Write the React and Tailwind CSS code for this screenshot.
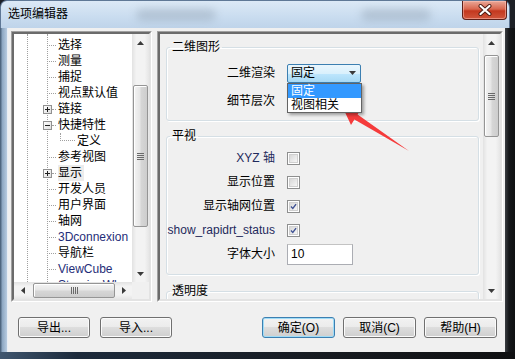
import React from "react";

function Tri({ dir }) {
  if (dir === "up")
    return (
      <svg width="7" height="4" viewBox="0 0 7 4"><path d="M0 4 L3.5 0 L7 4 Z" fill="#3a3a3a" /></svg>
    );
  if (dir === "down")
    return (
      <svg width="7" height="4" viewBox="0 0 7 4"><path d="M0 0 L7 0 L3.5 4 Z" fill="#3a3a3a" /></svg>
    );
  if (dir === "left")
    return (
      <svg width="4" height="7" viewBox="0 0 4 7"><path d="M4 0 L4 7 L0 3.5 Z" fill="#3a3a3a" /></svg>
    );
  return (
    <svg width="4" height="7" viewBox="0 0 4 7"><path d="M0 0 L4 3.5 L0 7 Z" fill="#3a3a3a" /></svg>
  );
}

function VGrip() {
  return (
    <div className="flex flex-col gap-[1px]">
      <div className="w-[7px] h-px bg-[#6a6a6a]" />
      <div className="w-[7px] h-px bg-[#6a6a6a]" />
      <div className="w-[7px] h-px bg-[#6a6a6a]" />
      <div className="w-[7px] h-px bg-[#6a6a6a]" />
    </div>
  );
}

function HGrip() {
  return (
    <div className="flex flex-row gap-[1px]">
      <div className="h-[7px] w-px bg-[#6a6a6a]" />
      <div className="h-[7px] w-px bg-[#6a6a6a]" />
      <div className="h-[7px] w-px bg-[#6a6a6a]" />
      <div className="h-[7px] w-px bg-[#6a6a6a]" />
    </div>
  );
}

function VScroll({ beforeCls, thumbCls }) {
  return (
    <div className="w-[17px] h-full flex flex-col bg-[linear-gradient(to_right,#e2e2e2,#f3f3f3_25%,#f3f3f3_75%,#e6e6e6)]">
      <div className="h-[17px] shrink-0 flex items-center justify-center">
        <Tri dir="up" />
      </div>
      <div className={"shrink-0 " + beforeCls} />
      <div
        className={
          "shrink-0 mx-[1px] rounded-[2px] border border-[#959595] bg-[linear-gradient(to_right,#f4f4f4,#e6e6e6_45%,#d6d6d6_55%,#cdcdcd)] shadow-[inset_1px_1px_0_#ffffff] flex items-center justify-center " +
          thumbCls
        }
      >
        <VGrip />
      </div>
      <div className="flex-1" />
      <div className="h-[17px] shrink-0 flex items-center justify-center">
        <Tri dir="down" />
      </div>
    </div>
  );
}

function HScroll() {
  return (
    <div className="h-[17px] w-full flex flex-row bg-[linear-gradient(to_bottom,#e2e2e2,#f3f3f3_25%,#f3f3f3_75%,#e6e6e6)]">
      <div className="w-[17px] shrink-0 flex items-center justify-center">
        <Tri dir="left" />
      </div>
      <div className="w-[2px] shrink-0" />
      <div className="w-[82px] shrink-0 my-[1px] rounded-[2px] border border-[#959595] bg-[linear-gradient(to_bottom,#f4f4f4,#e6e6e6_45%,#d6d6d6_55%,#cdcdcd)] shadow-[inset_1px_1px_0_#ffffff] flex items-center justify-center">
        <HGrip />
      </div>
      <div className="flex-1" />
      <div className="w-[17px] shrink-0 flex items-center justify-center">
        <Tri dir="right" />
      </div>
    </div>
  );
}

function Box({ plus }) {
  return (
    <svg width="9" height="9" viewBox="0 0 9 9" className="-ml-[4px] shrink-0 relative z-10">
      <defs>
        <linearGradient id={plus ? "gp" : "gm"} x1="0" y1="0" x2="1" y2="1">
          <stop offset="0" stopColor="#ffffff" />
          <stop offset="1" stopColor="#dcdcdc" />
        </linearGradient>
      </defs>
      <rect x="0.5" y="0.5" width="8" height="8" fill={plus ? "url(#gp)" : "url(#gm)"} stroke="#919191" />
      <line x1="2" y1="4.5" x2="7" y2="4.5" stroke="#1f1f1f" />
      {plus && <line x1="4.5" y1="2" x2="4.5" y2="7" stroke="#1f1f1f" />}
    </svg>
  );
}

const treeItems = [
  { t: "选择" },
  { t: "测量" },
  { t: "捕捉" },
  { t: "视点默认值" },
  { t: "链接", box: "plus" },
  { t: "快捷特性", box: "minus" },
  { t: "定义", child: true },
  { t: "参考视图" },
  { t: "显示", box: "plus", sel: true },
  { t: "开发人员" },
  { t: "用户界面" },
  { t: "轴网" },
  { t: "3Dconnexion", en: true },
  { t: "导航栏" },
  { t: "ViewCube", en: true },
  { t: "SteeringWheels", en: true },
];

function Tree() {
  return (
    <div className="relative bg-white overflow-hidden pt-[3px] h-full">
      <div className="absolute left-[13px] top-0 bottom-0 border-l border-dotted border-[#a0a0a0]" />
      <div className="absolute left-[33px] top-0 bottom-0 border-l border-dotted border-[#a0a0a0]" />
      {treeItems.map((it) =>
        it.child ? (
          <div key={it.t} className="h-[16px] flex items-start pl-[46px] whitespace-nowrap">
            <span className="w-[15px] h-[8px] shrink-0 border-l border-b border-dotted border-[#a0a0a0]" />
            <span className="ml-[2px] leading-[16px]">{it.t}</span>
          </div>
        ) : (
          <div key={it.t} className="h-[16px] flex items-center pl-[33px] whitespace-nowrap">
            {it.box ? (
              <>
                <Box plus={it.box === "plus"} />
                <span className="w-[4px] shrink-0 border-t border-dotted border-[#a0a0a0]" />
              </>
            ) : (
              <span className="w-[9px] shrink-0 border-t border-dotted border-[#a0a0a0]" />
            )}
            <span
              className={
                "ml-[2px] leading-[16px] " +
                (it.en ? "text-[#1f2d78] " : "") +
                (it.sel ? "bg-[#ececec] pr-[2px] -ml-[0px]" : "")
              }
            >
              {it.t}
            </span>
          </div>
        )
      )}
    </div>
  );
}

function Check({ checked }) {
  return (
    <div className="w-[13px] h-[13px] border border-[#8e8f8f] bg-white p-[1px]">
      <div className="w-full h-full border border-[#d0d0d0] bg-[linear-gradient(135deg,#d8d8d8,#f6f6f6)] flex items-center justify-center">
        {checked && (
          <svg width="9" height="9" viewBox="0 0 9 9">
            <path d="M1.2 4.6 L3.6 7 L7.8 1.4" stroke="#3e5193" strokeWidth="1.7" fill="none" />
          </svg>
        )}
      </div>
    </div>
  );
}

function Row({ label, children, h = "h-[24px]", labelCls = "" }) {
  return (
    <div className={"flex items-center " + h}>
      <div className={"w-[108px] shrink-0 text-right leading-[16px] whitespace-nowrap " + labelCls}>{label}</div>
      <div className="ml-[12px]">{children}</div>
    </div>
  );
}

function Group({ title, className, children }) {
  return (
    <fieldset
      className={
        "border border-[#d5dfe5] rounded-[3px] shadow-[inset_1px_1px_0_#ffffff,1px_1px_0_#ffffff] " + className
      }
    >
      <legend className="ml-[3px] px-[2px] leading-[14px] text-[12px]">{title}</legend>
      {children}
    </fieldset>
  );
}

function Btn({ children, def, w = "w-[72px]" }) {
  return (
    <div
      className={
        "h-[21px] rounded-[3px] border flex items-center justify-center leading-[16px] bg-[linear-gradient(#f2f2f2,#ebebeb_50%,#dddddd_50%,#cfcfcf)] " +
        w +
        (def
          ? " border-[#3c7fb1] shadow-[inset_0_0_0_1px_#9fdcf7]"
          : " border-[#707070] shadow-[inset_0_0_0_1px_#fbfbfb]")
      }
    >
      {children}
    </div>
  );
}

export default function App() {
  return (
    <div className="relative w-[515px] h-[359px] overflow-hidden bg-[#1d2026] flex flex-col font-['Liberation_Sans','Noto_Sans_CJK_SC',sans-serif] text-[12px] text-black">
      {/* title bar */}
      <div className="relative h-[28px] mr-[5px] shrink-0 rounded-t-[7px] border-t border-l border-r border-[#5f7896] bg-[linear-gradient(to_bottom,#dce9f6,#c9dcef_60%,#bfd4ea)] flex items-start justify-between">
        <div className="absolute left-[135px] top-[8px] w-[80px] h-[12px] rounded-full bg-[#8a9aab] opacity-40 blur-[4px]" />
        <div className="absolute left-[360px] top-[8px] w-[70px] h-[12px] rounded-full bg-[#8a9aab] opacity-40 blur-[4px]" />
        <div className="relative pl-[7px] pt-[5px] leading-[16px] text-[12px] text-black">选项编辑器</div>
        <div className="relative mr-[2px] w-[45px] h-[19px] rounded-b-[4px] border border-t-0 border-[#5e2019] bg-[linear-gradient(#e9a898,#d9664e_45%,#c3381f_55%,#d0563c)] shadow-[inset_0_0_0_1px_rgba(255,200,190,0.5)] flex items-center justify-center">
          <svg width="14" height="12" viewBox="0 0 14 12">
            <path d="M2.5 2 L11.5 10 M11.5 2 L2.5 10" stroke="#4a1a12" strokeWidth="4" strokeLinecap="round" />
            <path d="M2.5 2 L11.5 10 M11.5 2 L2.5 10" stroke="#ffffff" strokeWidth="2.2" strokeLinecap="round" />
          </svg>
        </div>
      </div>

      {/* body */}
      <div className="flex flex-1 min-h-0">
        <div className="w-[7px] shrink-0 bg-[linear-gradient(to_right,#3f566f,#8ea8c3_35%,#b7cbe0)]" />
        <div className="flex-1 bg-[#f0f0f0] flex flex-col border-l border-[#e8eef5]">
          <div className="flex h-[271px] pt-0 mt-[3px] pl-[3px] pr-[2px] gap-[5px]">
            {/* left panel */}
            <div className="w-[141px] shrink-0 h-[271px] border border-t-[#a0a0a0] border-l-[#a0a0a0] border-r-white border-b-white">
              <div className="w-full h-full border-2 border-t-[#6b6b6b] border-l-[#6b6b6b] border-r-[#e3e3e3] border-b-[#e3e3e3] grid grid-cols-[118px_17px] grid-rows-[248px_17px]">
                <Tree />
                <VScroll beforeCls="h-[34px]" thumbCls="h-[142px]" />
                <HScroll />
                <div className="bg-[#f0f0f0]" />
              </div>
            </div>
            {/* right panel */}
            <div className="flex-1 h-[271px] border border-t-[#a0a0a0] border-l-[#a0a0a0] border-r-white border-b-white">
              <div className="w-full h-full border-2 border-t-[#6b6b6b] border-l-[#6b6b6b] border-r-[#e3e3e3] border-b-[#e3e3e3] flex">
                <div className="flex-1 overflow-hidden bg-[#f0f0f0] pl-[6px] pr-[4px] pt-[6px]">
                  <Group title="二维图形" className="">
                    <div className="pt-[9px] pb-[9px] flex flex-col gap-[8px]">
                      <Row label="二维渲染" h="h-[20px]">
                        <div className="relative w-[74px] h-[19px] rounded-[2px] border border-[#3c7fb1] bg-[linear-gradient(#eaf6fd,#d9f0fc_50%,#bee6fd_50%,#a7d9f5)] flex items-center justify-between pl-[3px] pr-[4px]">
                          <span className="leading-[16px]">固定</span>
                          <Tri dir="down" />
                          <div className="absolute left-[-1px] top-[18px] w-[75px] border border-[#646464] bg-white shadow-[2px_2px_3px_rgba(0,0,0,0.35)] z-10">
                            <div className="h-[14px] leading-[14px] bg-[#3399ff] text-white pl-[3px]">固定</div>
                            <div className="h-[14px] leading-[14px] pl-[3px]">视图相关</div>
                          </div>
                        </div>
                      </Row>
                      <Row label="细节层次" h="h-[20px]">
                        <div className="w-[74px] h-[19px]" />
                      </Row>
                    </div>
                  </Group>
                  <Group title="平视" className="mt-[8px]">
                    <div className="pt-[3px] pb-[8px] flex flex-col">
                      <Row label="XYZ 轴" labelCls="text-[#1f2a5c]">
                        <Check />
                      </Row>
                      <Row label="显示位置">
                        <Check />
                      </Row>
                      <Row label="显示轴网位置">
                        <Check checked />
                      </Row>
                      <Row label="show_rapidrt_status" labelCls="text-[#1f2a5c]">
                        <Check checked />
                      </Row>
                      <Row label="字体大小">
                        <div className="w-[66px] h-[21px] border border-[#abadb3] border-t-[#c3c3c3] bg-white pl-[3px] flex items-center leading-[16px]">
                          10
                        </div>
                      </Row>
                    </div>
                  </Group>
                  <Group title="透明度" className="mt-[9px]">
                    <div className="h-[40px]" />
                  </Group>
                </div>
                <VScroll beforeCls="h-[4px]" thumbCls="h-[82px]" />
              </div>
            </div>
          </div>

          {/* buttons */}
          <div className="mt-[15px] flex justify-between pl-[10px] pr-[8px]">
            <div className="flex gap-[10px]">
              <Btn>导出...</Btn>
              <Btn>导入...</Btn>
            </div>
            <div className="flex gap-[8px]">
              <Btn def w="w-[73px]">确定(O)</Btn>
              <Btn w="w-[73px]">取消(C)</Btn>
              <Btn w="w-[73px]">帮助(H)</Btn>
            </div>
          </div>
        </div>
        <div className="w-[10px] shrink-0 bg-[linear-gradient(to_right,#3a3d42,#15171a_40%,#0f1012)]" />
      </div>
      <div className="h-[7px] shrink-0 bg-[linear-gradient(to_right,#3f566f,#1c2a3b_15%,#181c22_60%,#0f1012)]" />

      {/* red annotation arrow */}
      <svg className="absolute left-0 top-0 pointer-events-none" width="515" height="359" viewBox="0 0 515 359">
        <polygon points="343,108 361,109 357.6,114.5 409,151 354.4,119.5 351,125" fill="#f53b3b" />
      </svg>
    </div>
  );
}
